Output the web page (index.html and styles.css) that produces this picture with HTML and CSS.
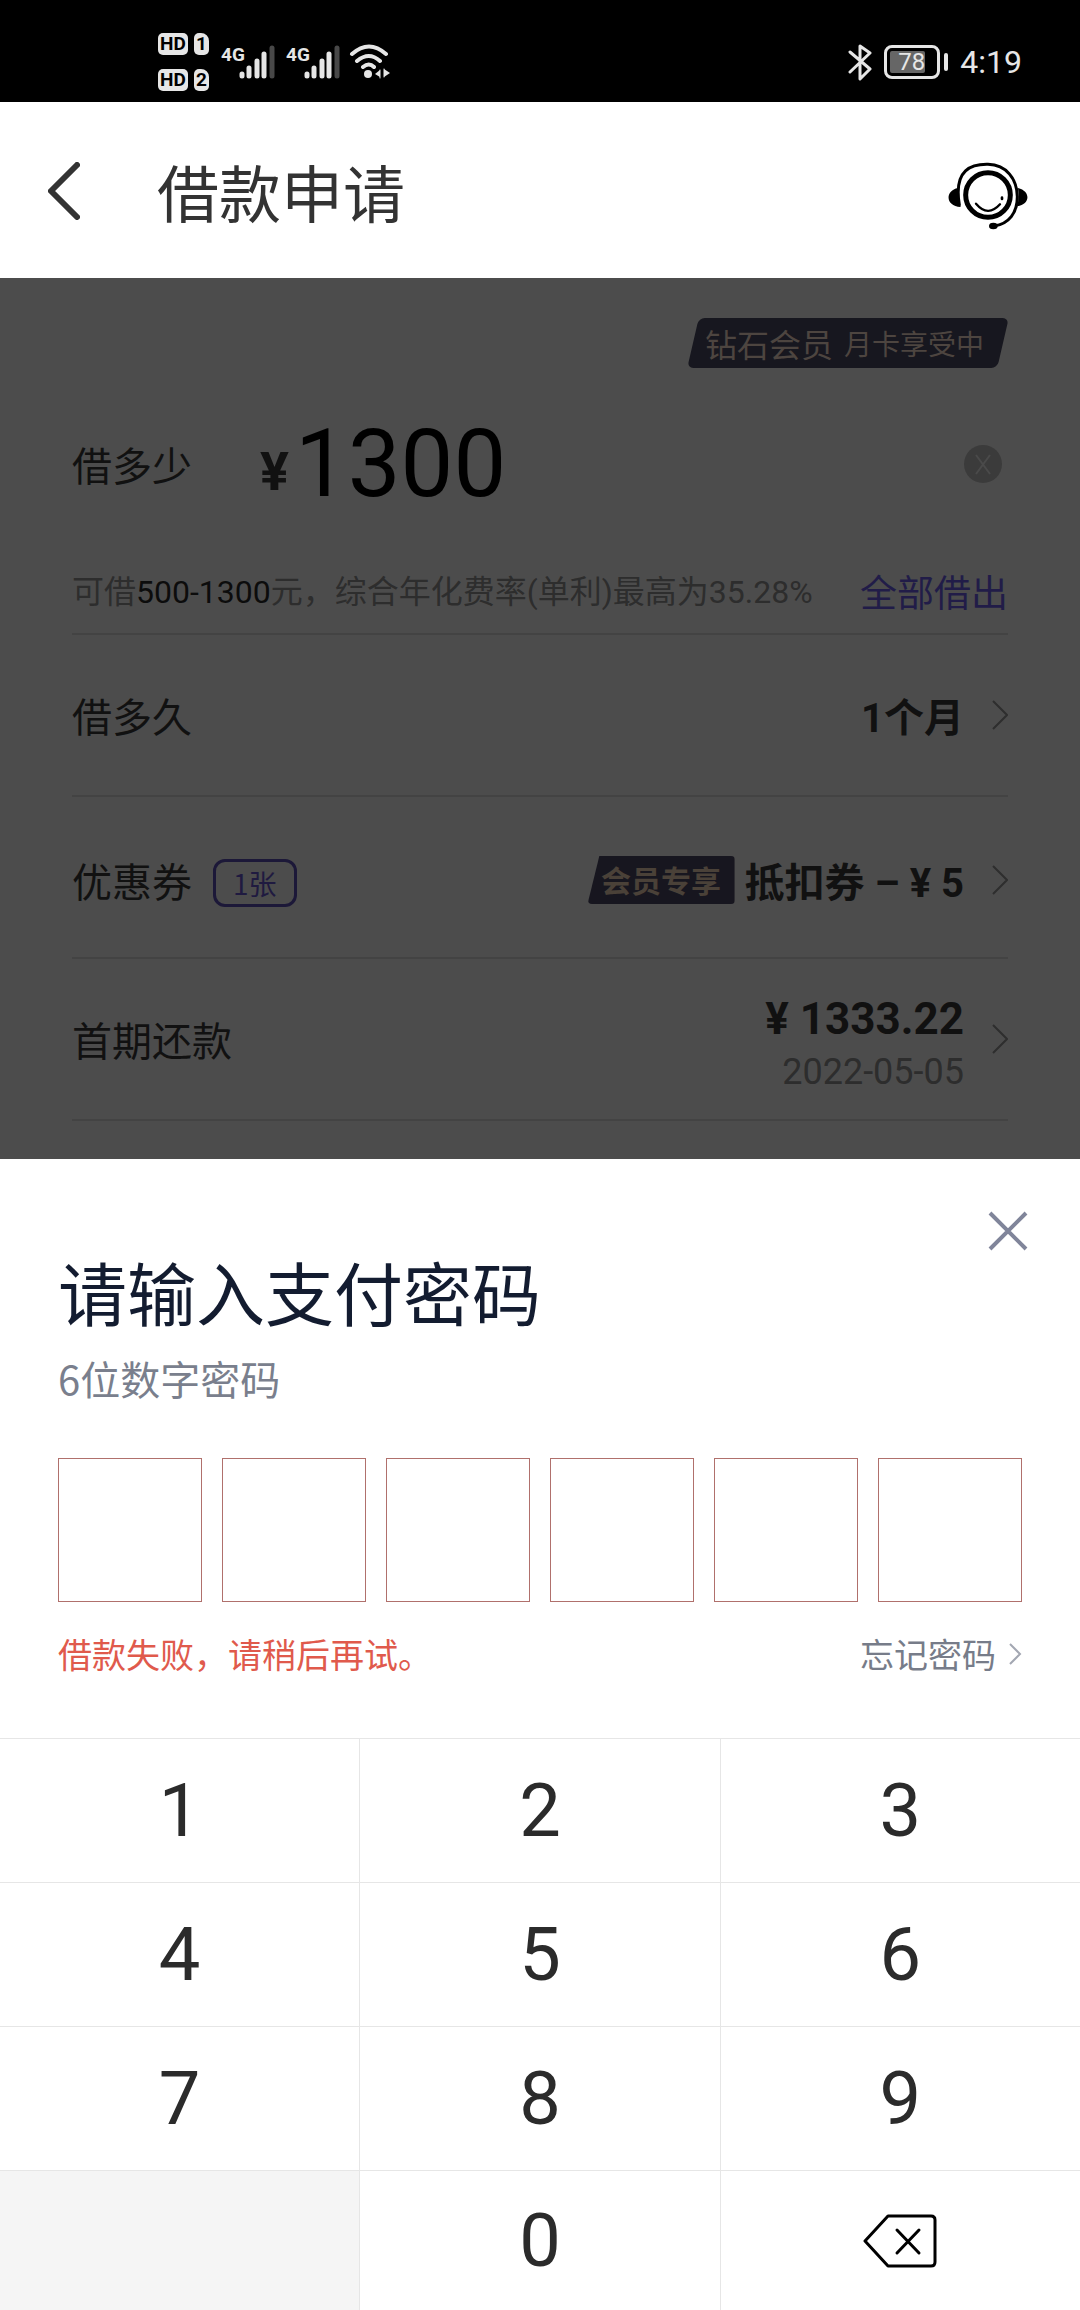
FILE: index.html
```html
<!DOCTYPE html>
<html lang="zh-CN">
<head>
    <meta charset="UTF-8">
    <meta name="viewport" content="width=device-width, initial-scale=1.0">
    <title>借款申请</title>
    <link rel="stylesheet" href="styles.css">
</head>
<body>
    <div class="status-bar">
        <div class="status-left">
            <div class="hd-list">
                <div class="hd-line"><span class="hd-badge">HD</span><span class="sim-badge">1</span></div>
                <div class="hd-line"><span class="hd-badge">HD</span><span class="sim-badge">2</span></div>
            </div>
            <div class="signal">
                <span>4G</span>
                <svg width="36" height="34" viewBox="0 0 36 34" stroke="#e6e6e6" stroke-width="5" stroke-linecap="round">
                    <path d="M3 29v2M10 23v8M18 16v15M25 9v22"/>
                    <path d="M33 3v28" stroke="#484848"/>
                </svg>
            </div>
            <div class="signal">
                <span>4G</span>
                <svg width="36" height="34" viewBox="0 0 36 34" stroke="#e6e6e6" stroke-width="5" stroke-linecap="round">
                    <path d="M3 29v2M10 23v8M18 16v15M25 9v22"/>
                    <path d="M33 3v28" stroke="#484848"/>
                </svg>
            </div>
            <svg class="wifi" width="42" height="36" viewBox="0 0 42 36" fill="none" stroke="#e6e6e6" stroke-width="4" stroke-linecap="round">
                <path d="M3 10Q20 -5 37 10M8 17Q20 7 31 17M14 23Q20 18 25 23"/>
                <circle cx="19" cy="30" r="4" fill="#e6e6e6" stroke="none"/>
                <path d="M31 26v7l-5-3zM35 25l6 4-6 4z" fill="#e6e6e6" stroke="none"/>
                <path d="M31 26v8M35 25v8" stroke-width="1"/>
            </svg>
        </div>
        <div class="status-right">
            <svg width="24" height="38" viewBox="0 0 24 38" fill="none" stroke="#e6e6e6" stroke-width="3" stroke-linecap="round" stroke-linejoin="round">
                <path d="M2 9l20 17-10 10V3l10 7L2 29"/>
            </svg>
            <div class="battery"><span class="battery-level">78</span></div>
            <span class="time">4:19</span>
        </div>
    </div>

    <header class="header">
        <button class="icon-btn" aria-label="返回">
            <svg width="32" height="58" viewBox="0 0 32 58" fill="none" stroke="#333" stroke-width="6" stroke-linecap="round" stroke-linejoin="round">
                <path d="M29 3L3 29l26 26"/>
            </svg>
        </button>
        <h1>借款申请</h1>
        <button class="icon-btn service" aria-label="客服">
            <svg width="80" height="68" viewBox="142 98 240 204" fill="none" stroke="#000" stroke-linecap="round">
                <path d="M176 226C158 118 215 104 262 105C318 106 349 150 350 202C350 250 325 284 280 290" stroke-width="9"/>
                <circle cx="262" cy="197" r="67" stroke-width="15"/>
                <path d="M226 223Q262 265 298 225" stroke-width="7"/>
                <path d="M304 205v4" stroke-width="8"/>
                <path d="M172 176C132 184 134 232 180 233Q170 206 172 176zM352 176C392 186 388 226 350 231Q356 206 352 176z" fill="#000" stroke="none"/>
                <ellipse cx="278" cy="290" rx="13" ry="10" fill="#000" stroke="none"/>
            </svg>
        </button>
    </header>

    <main class="loan">
        <div class="member-line">
            <div class="member-badge">
                <span class="member-level">钻石会员</span>
                <span class="member-card">月卡享受中</span>
            </div>
        </div>
        <div class="amount">
            <label for="amount">借多少</label>
            <span class="yuan">¥</span>
            <input type="text" id="amount" value="1300">
            <button class="clear" aria-label="清除">
                <svg width="38" height="38" viewBox="0 0 38 38">
                    <circle cx="19" cy="19" r="19" fill="#3b3b3b"/>
                    <path d="M12 10l14 19M26 10L12 29" stroke="#4a4a4a" stroke-width="2"/>
                </svg>
            </button>
        </div>
        <div class="hint">
            <p>可借<b>500-1300</b>元，综合年化费率(单利)最高为35.28%</p>
            <button class="all">全部借出</button>
        </div>
        <div class="row">
            <span>借多久</span>
            <strong class="value">1个月</strong>
            <svg class="arrow" viewBox="0 0 16 30"><path d="M1 1l14 14L1 29"/></svg>
        </div>
        <div class="row coupon">
            <span>优惠券</span>
            <span class="count">1张</span>
            <span class="value"><span class="vip">会员专享</span><strong>抵扣券 – ¥ 5</strong></span>
            <svg class="arrow" viewBox="0 0 16 30"><path d="M1 1l14 14L1 29"/></svg>
        </div>
        <div class="row">
            <span>首期还款</span>
            <div class="value repay">
                <strong>¥ 1333.22</strong>
                <span>2022-05-05</span>
            </div>
            <svg class="arrow" viewBox="0 0 16 30"><path d="M1 1l14 14L1 29"/></svg>
        </div>
    </main>

    <section class="sheet">
        <div class="sheet-top">
            <button class="icon-btn" aria-label="关闭">
                <svg width="40" height="40" viewBox="0 0 40 40" stroke="#80859a" stroke-width="4">
                    <path d="M2 2l36 36M38 2L2 38"/>
                </svg>
            </button>
        </div>
        <div class="sheet-body">
            <h2>请输入支付密码</h2>
            <p class="sub">6位数字密码</p>
            <div class="code">
                <input type="password" maxlength="1" aria-label="第1位">
                <input type="password" maxlength="1" aria-label="第2位">
                <input type="password" maxlength="1" aria-label="第3位">
                <input type="password" maxlength="1" aria-label="第4位">
                <input type="password" maxlength="1" aria-label="第5位">
                <input type="password" maxlength="1" aria-label="第6位">
            </div>
            <div class="message">
                <span class="error">借款失败，请稍后再试。</span>
                <a href="#" class="forgot">忘记密码
                    <svg width="14" height="24" viewBox="0 0 14 24" fill="none" stroke="#a3a7b2" stroke-width="2"><path d="M2 2l10 10L2 22"/></svg>
                </a>
            </div>
        </div>
        <div class="keypad">
            <button>1</button>
            <button>2</button>
            <button>3</button>
            <button>4</button>
            <button>5</button>
            <button>6</button>
            <button>7</button>
            <button>8</button>
            <button>9</button>
            <div class="blank"></div>
            <button>0</button>
            <button aria-label="删除">
                <svg width="74" height="56" viewBox="0 0 74 56" fill="none" stroke="#000" stroke-width="3" stroke-linecap="round" stroke-linejoin="round">
                    <path d="M25 3h43q4 0 4 4v42q0 4-4 4H25L2 28z"/>
                    <path d="M34 17l22 23M56 17L34 40"/>
                </svg>
            </button>
        </div>
    </section>
</body>
</html>
```

FILE: styles.css
```css
* {
    box-sizing: border-box;
}

body {
    margin: 0;
    min-height: 100vh;
    display: flex;
    flex-direction: column;
    font-family: "Noto Sans CJK SC", sans-serif;
    background-color: #fff;
    color: #111;
}

h1, h2, p {
    margin: 0;
    font-weight: normal;
}

button, input {
    font-family: inherit;
    color: inherit;
    padding: 0;
    border: none;
    background: none;
}

svg {
    display: block;
}

/* status bar */
.status-bar {
    display: flex;
    justify-content: space-between;
    height: 102px;
    padding: 23px 58px 0 158px;
    background-color: #000;
    color: #e6e6e6;
    font-family: Roboto, sans-serif;
}

.status-left,
.status-right {
    display: flex;
    align-items: center;
    height: 78px;
}

.status-left {
    gap: 12px;
}

.hd-list {
    display: grid;
    gap: 14px;
}

.hd-line {
    display: flex;
    gap: 6px;
}

.hd-badge,
.sim-badge {
    height: 22px;
    border-radius: 5px;
    background-color: #e6e6e6;
    color: #000;
    font-size: 19px;
    font-weight: bold;
    line-height: 22px;
    text-align: center;
}

.hd-badge {
    width: 30px;
}

.sim-badge {
    width: 15px;
    border-top-right-radius: 8px;
}

.signal {
    display: flex;
    align-items: flex-start;
    width: 53px;
}

.signal span {
    width: 18px;
    font-size: 19px;
    font-weight: bold;
    line-height: 19px;
    white-space: nowrap;
}

.signal svg {
    flex: none;
}

.wifi {
    margin-left: -2px;
}

.status-right {
    gap: 12px;
}

.battery {
    position: relative;
    width: 56px;
    height: 34px;
    padding: 3px;
    margin-right: 8px;
    border: 3px solid #e6e6e6;
    border-radius: 8px;
}

.battery::after {
    content: "";
    position: absolute;
    top: 5px;
    right: -11px;
    width: 4px;
    height: 18px;
    border-radius: 2px;
    background-color: #e6e6e6;
}

.battery-level {
    display: block;
    width: 35px;
    height: 22px;
    padding-left: 8px;
    background-color: #666;
    border-radius: 2px;
    font-size: 24px;
    line-height: 22px;
}

.time {
    font-size: 32px;
    line-height: 40px;
}

/* header */
.header {
    display: flex;
    align-items: center;
    gap: 77px;
    height: 176px;
    padding: 2px 52px 0 48px;
}

.header h1 {
    flex: 1;
    font-family: KaiTi, STKaiti, "Noto Sans CJK SC", sans-serif;
    font-size: 62px;
    line-height: 80px;
    color: #333;
}

.service {
    padding-top: 10px;
}

/* loan form, dimmed behind the sheet */
.loan {
    padding: 40px 72px 38px;
    background-color: #4c4c4c;
    font-size: 40px;
}

.member-line {
    display: flex;
    justify-content: flex-end;
}

.member-badge {
    position: relative;
    z-index: 0;
    display: flex;
    align-items: center;
    gap: 11px;
    width: 320px;
    height: 50px;
    padding-left: 17px;
    color: #4d4540;
}

.member-badge::before {
    content: "";
    position: absolute;
    inset: 0 5px;
    z-index: -1;
    border-radius: 6px;
    background-color: #17171f;
    transform: skewX(-13deg);
}

.member-level {
    font-size: 32px;
}

.member-card {
    font-size: 28px;
}

.amount {
    display: flex;
    align-items: center;
    height: 192px;
    padding-right: 6px;
}

.yuan {
    margin-left: 68px;
    padding-top: 16px;
    font-family: Roboto, sans-serif;
    font-size: 54px;
    font-weight: bold;
    line-height: 70px;
}

.amount input {
    flex: 1;
    min-width: 0;
    margin-left: 6px;
    font-family: Roboto, sans-serif;
    font-size: 94px;
    line-height: 120px;
    height: 120px;
    color: #000;
}

.hint {
    display: flex;
    align-items: center;
    justify-content: space-between;
    height: 75px;
    padding-bottom: 16px;
    border-bottom: 2px solid #434343;
    font-family: Roboto, "Noto Sans CJK SC", sans-serif;
    font-size: 32px;
    color: #2d2d2d;
    white-space: nowrap;
}

.hint b {
    font-weight: normal;
    color: #0c0c0c;
}

.all {
    padding-top: 4px;
    font-size: 37px;
    color: #211c48;
}

.row {
    display: flex;
    align-items: center;
    height: 162px;
    border-bottom: 2px solid #434343;
}

.coupon {
    padding-top: 6px;
}

.count {
    height: 48px;
    margin: 6px 0 0 21px;
    padding: 0 17px;
    border: 3px solid #1c1838;
    border-radius: 12px;
    color: #1f1a40;
    font-size: 28px;
    line-height: 42px;
}

.value {
    display: flex;
    align-items: center;
    margin-left: auto;
    font-family: Roboto, "Noto Sans CJK SC", sans-serif;
}

.vip {
    position: relative;
    z-index: 0;
    width: 147px;
    height: 48px;
    margin-right: 10px;
    font-family: "Noto Sans CJK SC", sans-serif;
    font-size: 30px;
    font-weight: bold;
    line-height: 46px;
    text-align: center;
    color: #4a4138;
}

.vip::before {
    content: "";
    position: absolute;
    inset: 0;
    z-index: -1;
    border-radius: 4px;
    background-color: #17161f;
    clip-path: polygon(8% 0, 100% 0, 100% 100%, 0 100%);
}

.repay {
    flex-direction: column;
    align-items: flex-end;
    padding-top: 12px;
}

.repay strong {
    font-size: 44px;
    line-height: 54px;
}

.repay span {
    font-size: 36px;
    line-height: 52px;
    color: #2d2d2d;
}

.arrow {
    width: 16px;
    height: 30px;
    margin-left: 28px;
    fill: none;
    stroke: #2e2e2e;
    stroke-width: 2;
}

/* password sheet */
.sheet {
    flex: 1;
    display: flex;
    flex-direction: column;
    background-color: #fff;
}

.sheet-top {
    display: flex;
    justify-content: flex-end;
    padding: 52px 52px 0;
}

.sheet-body {
    padding: 0 58px 58px;
}

.sheet h2 {
    font-size: 69px;
    line-height: 80px;
    color: #131c30;
}

.sub {
    margin-top: 19px;
    font-size: 40px;
    line-height: 56px;
    color: #7a7f8d;
}

.code {
    display: grid;
    grid-template-columns: repeat(6, 1fr);
    gap: 20px;
    margin-top: 52px;
}

.code input {
    width: 100%;
    aspect-ratio: 1;
    border: 1px solid #b0706c;
    border-radius: 0;
    font-size: 69px;
    text-align: center;
}

.message {
    display: flex;
    justify-content: space-between;
    margin-top: 26px;
    font-size: 34px;
    line-height: 52px;
}

.error {
    color: #e05a4c;
}

.forgot {
    display: flex;
    align-items: center;
    gap: 12px;
    color: #777c89;
    text-decoration: none;
}

.keypad {
    flex: 1;
    display: grid;
    grid-template-columns: repeat(3, 1fr);
    grid-template-rows: repeat(3, 143px) 1fr;
    gap: 1px;
    padding-top: 1px;
    background-color: #e6e6e6;
}

.keypad button {
    display: flex;
    align-items: center;
    justify-content: center;
    background-color: #fff;
    font-family: Roboto, sans-serif;
    font-size: 74px;
    line-height: 100px;
    color: #2b2b2b;
}

.blank {
    background-color: #f5f5f5;
}
```
